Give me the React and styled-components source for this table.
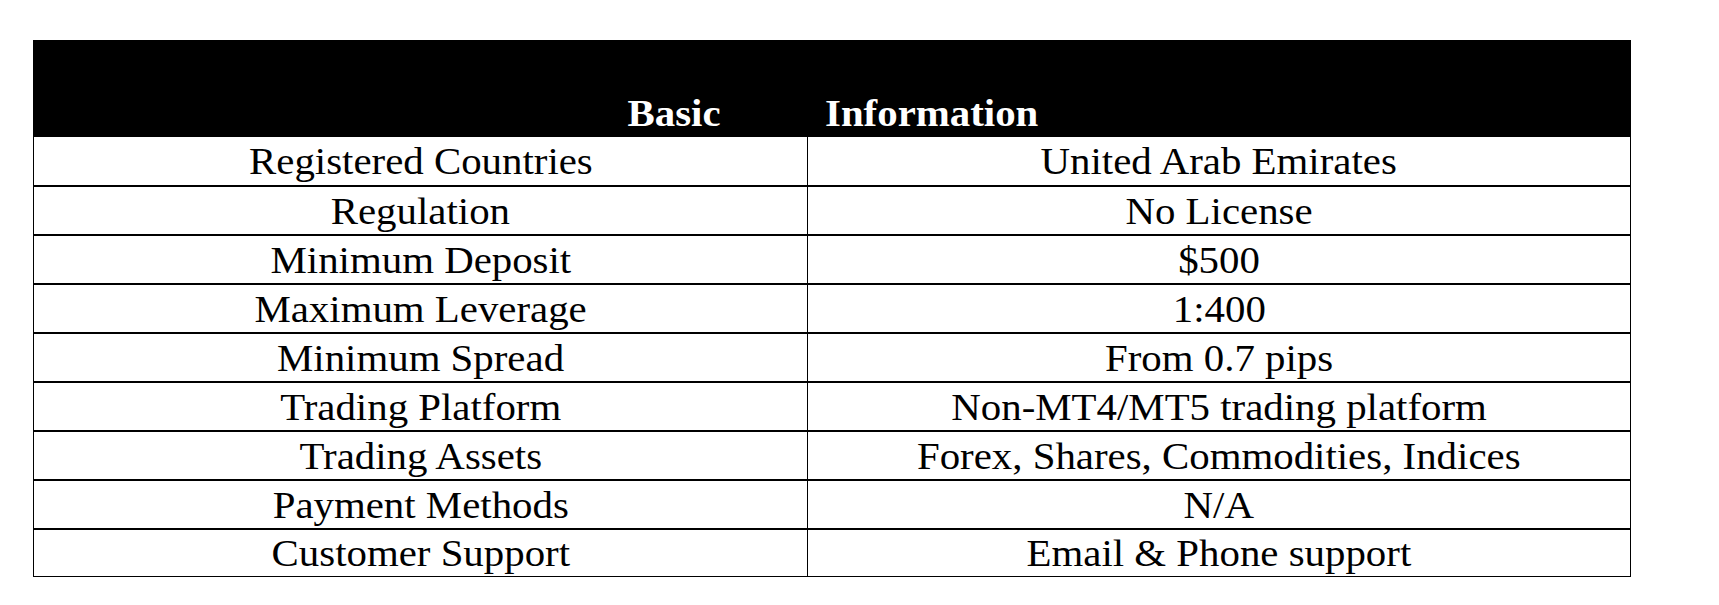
import React from 'react';
import styled, { createGlobalStyle } from 'styled-components';

const GlobalStyle = createGlobalStyle`
    body {
        margin: 0;
        background-color: #FFFFFF;
        font-family: "Liberation Serif", "Times New Roman", serif;
    }
`;

const Page = styled.div`
    padding: 40px 0px 0px 33px;
`;

const Table = styled.div`
    width: 1598px;
    box-sizing: border-box;
`;

const Header = styled.div`
    height: 97px;
    background-color: #000000;
    display: grid;
    grid-template-columns: 774px 1fr;
    align-items: end;
    color: #FFFFFF;
    font-size: 38px;
    font-weight: bold;
    line-height: 47px;
`;

const HeadLeft = styled.div`
    text-align: right;
    padding-right: 86px;
`;

const HeadRight = styled.div`
    text-align: left;
    padding-left: 18px;
`;

// the source table is drawn a little wide, so stretch the glyphs to match
const Stretch = styled.span`
    display: inline-block;
    transform: scaleX(1.075);
    transform-origin: ${props => props.origin || 'center'};
`;

const Body = styled.div`
    border-left: 1px solid #000000;
    border-right: 1px solid #000000;
`;

const Row = styled.div`
    display: grid;
    grid-template-columns: 773px 1fr;
    height: ${props => props.first ? 50 : props.last ? 47 : 49}px;
    box-sizing: border-box;
    border-bottom: ${props => props.last ? 1 : 2}px solid #000000;
`;

const Cell = styled.div`
    text-align: center;
    color: #000000;
    font-size: 38px;
    line-height: 47px;
    padding-top: ${props => props.tight ? 0 : 1}px;
    white-space: nowrap;
    border-left: ${props => props.divider ? '1px solid #000000' : 'none'};
`;

const rows = [
    ['Registered Countries', 'United Arab Emirates'],
    ['Regulation', 'No License'],
    ['Minimum Deposit', '$500'],
    ['Maximum Leverage', '1:400'],
    ['Minimum Spread', 'From 0.7 pips'],
    ['Trading Platform', 'Non-MT4/MT5 trading platform'],
    ['Trading Assets', 'Forex, Shares, Commodities, Indices'],
    ['Payment Methods', 'N/A'],
    ['Customer Support', 'Email & Phone support'],
];

const App = () => {
    return (
        <Page>
            <GlobalStyle />
            <Table>
                <Header>
                    <HeadLeft><Stretch origin="right">Basic</Stretch></HeadLeft>
                    <HeadRight><Stretch origin="left">Information</Stretch></HeadRight>
                </Header>
                <Body>
                    {
                        rows.map(([label, value], i) => {
                            const last = i === rows.length - 1;
                            return (
                                <Row key={label} first={i === 0} last={last}>
                                    <Cell tight={last}><Stretch>{label}</Stretch></Cell>
                                    <Cell tight={last} divider><Stretch>{value}</Stretch></Cell>
                                </Row>
                            );
                        })
                    }
                </Body>
            </Table>
        </Page>
    )
}

export default App;
